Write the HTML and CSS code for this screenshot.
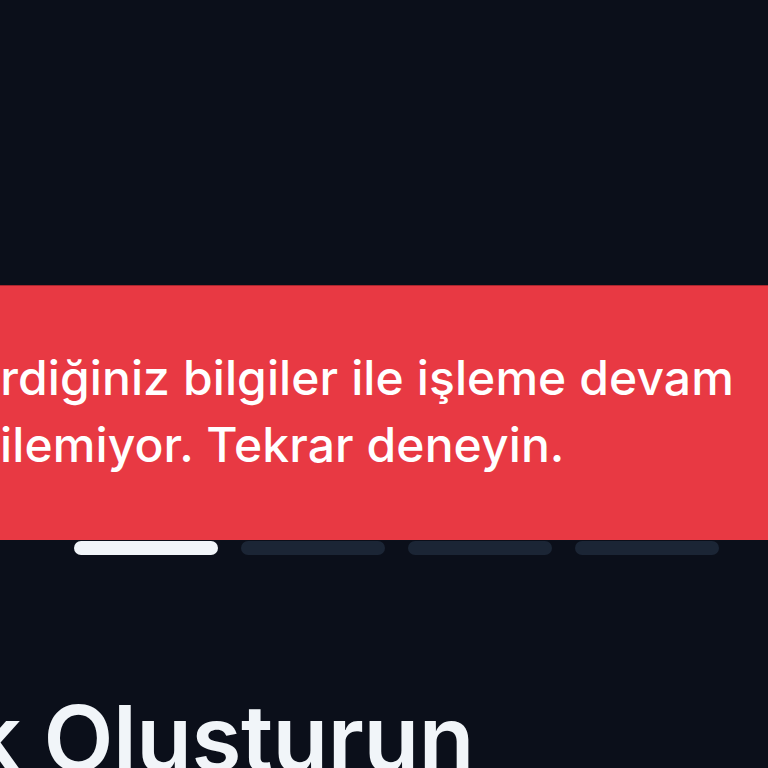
FILE: index.html
```html
<!DOCTYPE html>
<html lang="tr">
<head>
<meta charset="utf-8">
<link rel="stylesheet" href="styles.css">
</head>
<body>
<div class="screen">
  <div class="progress">
    <span class="seg active"></span>
    <span class="seg"></span>
    <span class="seg"></span>
    <span class="seg"></span>
  </div>
  <h1 class="title">Kimlik Oluşturun</h1>
  <div class="toast">
    <p class="toast-text">Girdiğiniz bilgiler ile işleme devam edilemiyor. Tekrar deneyin.</p>
  </div>
</div>
</body>
</html>
```
FILE: styles.css
```css
html, body {
  margin: 0;
  padding: 0;
  background: #0b0f1a;
  overflow: hidden;
}
.screen {
  position: relative;
  width: 768px;
  height: 768px;
  overflow: hidden;
  background: #0b0f1a;
  font-family: Inter, "Noto Sans", sans-serif;
  padding-top: 541px;
  box-sizing: border-box;
}
.progress {
  display: flex;
  gap: 23px;
  margin-left: 74px;
  width: 645px;
}
.seg {
  flex: 1;
  height: 14px;
  border-radius: 7px;
  background: #1b2535;
}
.seg.active {
  background: #f1f5f9;
}
.title {
  margin: 138px 0 0 -246px;
  font-size: 91px;
  font-weight: 600;
  color: #f1f5f9;
  white-space: nowrap;
  line-height: 1;
  letter-spacing: -0.5px;
}
.toast {
  position: absolute;
  left: 0;
  top: 285px;
  width: 768px;
  height: 255px;
  background: #e83943;
  border-top: 1px solid #a8262e;
  box-sizing: border-box;
  overflow: hidden;
  display: flex;
  align-items: center;
}
.toast-text {
  margin: -4px 0 0 -58px;
  text-indent: 10px;
  width: 830px;
  font-size: 48px;
  font-weight: 500;
  line-height: 67px;
  letter-spacing: 0.1px;
  color: #ffffff;
}
```
